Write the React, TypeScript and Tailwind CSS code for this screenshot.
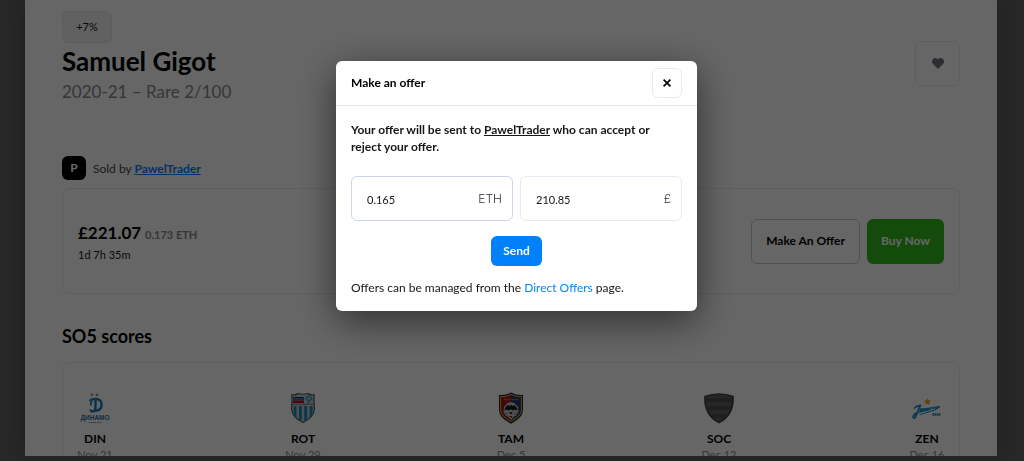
import React, { useState } from "react";

function DinamoLogo() {
  return (
    <svg viewBox="0 0 32 32" className="h-8 w-8" aria-hidden="true">
      <path d="M13 1l.6 1 1.200.1-.9.9.3 1.200-1.200-.5-1.100.5.2-1.200-.9-.9 1.200-.1zM18 1l.6 1 1.200.1-.9.9.3 1.200-1.200-.5-1.100.5.2-1.200-.9-.9 1.200-.1z" fill="#b98a5c" />
      <path d="M11 9.200c.8-3 11.600-4.400 11.600 3.600 0 5.200-4 6.400-8 6" fill="none" stroke="#1c78bd" strokeWidth="2.400" />
      <path d="M16.500 7v8.500c0 2.500-1.200 4-3 4-1.300 0-2-.9-1.600-2" fill="none" stroke="#1c78bd" strokeWidth="2.400" />
      <path d="M13.500 9.500q-3 1.200-1.200 4.200" fill="none" stroke="#1c78bd" strokeWidth="1.500" />
      <text x="16" y="27.500" textAnchor="middle" fontSize="6.500" fontWeight="700" fill="#2c70a8" fontFamily="Liberation Sans, sans-serif">ДИНАМО</text>
      <path d="M10 30.500h12.500" stroke="#a08468" strokeWidth="1.200" strokeDasharray="1.300 .6" />
    </svg>
  );
}

function RotorLogo() {
  return (
    <svg viewBox="0 0 32 32" className="h-8 w-8" aria-hidden="true">
      <path d="M5 2.500Q9 3.500 11 1.500Q16 3 21 1.500Q23 3.500 27 2.500Q27.500 5 27 8L27.500 17Q27 25 16 30.500Q5 25 4.500 17L5 8Q4.500 5 5 2.500Z" fill="#c5cacd" stroke="#535a60" strokeWidth="1.200" />
      <path d="M6 5h11v1.500H6z" fill="#26394a" />
      <path d="M6 6.500h11v2H6z" fill="#1879c0" />
      <path d="M6 8.500h11V11H6z" fill="#c70b24" />
      <path d="M19.500 5.500q2.500-2 5 0 .8 2-1.500 2.500l-1.500 2.200-.8-2.200q-1.700-.5-1.200-2.500z" fill="none" stroke="#279bd4" strokeWidth="1.400" />
      <path d="M5 12.200h22" stroke="#52575d" strokeWidth="1" strokeDasharray="2 .7" />
      <path d="M6.500 14h3v12q-3-3-3-7zM12 14h2.800v15L12 27.500zM17.300 14h2.800v13.500l-2.800 1.500zM22.600 14h3v5q0 4-3 7z" fill="#1489c2" />
    </svg>
  );
}

function TambovLogo() {
  return (
    <svg viewBox="0 0 32 32" className="h-8 w-8" aria-hidden="true">
      <path d="M16 1.500Q21 4.500 27 4v14q0 7-11 12.500Q5 25 5 18V4q6 .5 11-2.500z" fill="#a71522" stroke="#161616" strokeWidth="2" />
      <path d="M16 3Q21 5.500 26 5v13q0 6-10 11z" fill="#24356d" />
      <path d="M16 2.500Q21 5 26.500 4.500v13.500q0 6-10.500 11.500Q5.500 24 5.500 18V4.500q5.500.5 10.500-2z" fill="none" stroke="#c8a22c" strokeWidth="1.200" />
      <path d="M9 7.500h7" stroke="#e05a4b" strokeWidth="1.500" strokeDasharray="1.800 .6" />
      <path d="M16.500 7.500h7" stroke="#8d73a1" strokeWidth="1.500" strokeDasharray="1.800 .6" />
      <path d="M9 15l3.500-4 3.500-1 3.500 1 3.500 4 .5 5-2.500 4-2 .5L16 28l-3-3.500-2-.5L8.500 20z" fill="#c4c7cc" />
      <path d="M10 16l2.500-3 2 1L16 12.500l1.500 1.500 2-1 2.500 3 .5 2.500-2.500-1-1.500 1-2-1h-1l-2 1-1.500-1-2.500 1z" fill="#16191f" />
      <path d="M14.500 20h3l-.5 2h-2zM14.500 24h3L16 26z" fill="#24272d" />
      <path d="M10.500 21l2 1.500M21.500 21l-2 1.500" stroke="#4b4e54" strokeWidth=".8" />
    </svg>
  );
}

function SochiLogo() {
  return (
    <svg viewBox="0 0 32 32" className="h-8 w-8" aria-hidden="true">
      <path d="M16 2q7 0 14 2.500Q31 23 16 30.500 1 23 2 4.500 9 2 16 2z" fill="#606060" stroke="#3c3c3c" strokeWidth="1.600" />
      <path d="M3 6h26v4H3zM3.500 14h25l-1.500 4H5zM7 22h18l-3.500 4h-11z" fill="#4e4e4e" />
    </svg>
  );
}

function ZenitLogo() {
  return (
    <svg viewBox="0 0 32 32" className="h-8 w-8" aria-hidden="true">
      <path d="M16.500 6l1 2.400 2.600.2-2 1.700.6 2.500-2.200-1.300-2.200 1.300.6-2.500-2-1.700 2.600-.2z" fill="#d5a427" />
      <g fill="none" stroke="#1790cd" strokeLinecap="round" strokeLinejoin="round">
        <path d="M3.500 16q2.500-2.500 6-2.700Q7.500 17 5.500 22.500q-1 4-3 3.500-2-2 4-5.700" strokeWidth="1.700" />
        <path d="M8.500 18.500q3-.3 2.800-1.700-1-.8-2 .8-.8 2.300 1 2 1.700-.8 2.600-3l-.5 2.500q1.500-2.800 2.800-2.700l-.6 2.500q1.500-2.500 2.400-2.700l-.3 2.200 2-2.400 9.800-1.500-4 2.500" strokeWidth="1.200" />
        <path d="M6.500 20.800L29 14.500l-5 3.500L9 22.500" strokeWidth="1" />
      </g>
      <path d="M21.500 22.500h8" stroke="#2d79a7" strokeWidth="2.300" strokeDasharray="1.600 .5" />
    </svg>
  );
}

const fixtures = [
  { team: "DIN", date: "Nov 21", Logo: DinamoLogo },
  { team: "ROT", date: "Nov 29", Logo: RotorLogo },
  { team: "TAM", date: "Dec 5", Logo: TambovLogo },
  { team: "SOC", date: "Dec 12", Logo: SochiLogo },
  { team: "ZEN", date: "Dec 16", Logo: ZenitLogo },
];

function CardPage() {
  return (
    <div className="flex h-screen flex-col bg-[#626262] pr-[27px] pb-[5px] pl-[25px]">
      <main className="min-h-0 flex-1 overflow-hidden bg-white px-[37px] pt-[11px] shadow-[0_0_20px_rgba(0,0,0,0.2)]">
        <header className="flex items-start justify-between">
          <div>
            <span className="flex h-8 w-[50px] items-center justify-center rounded-md border border-[#e8e8e8] bg-[#f2f2f2] text-[11px]">+7%</span>
            <h1 className="text-[26px] leading-9 font-bold text-black">Samuel Gigot</h1>
            <p className="text-[17px] leading-[26px] text-[#85878f]">2020-21 – Rare 2/100</p>
          </div>
          <button type="button" aria-label="Add to favourites" className="mt-[30px] flex h-[45px] w-[45px] items-center justify-center rounded-md border border-[#ececf2]">
            <svg viewBox="0 0 24 22" className="h-[11px] w-3" aria-hidden="true">
              <path d="M12 22L2 12C-1 8.500-.5 4 2.500 1.500 5.500-.8 9.500 0 12 3c2.500-3 6.500-3.800 9.500-1.500 3 2.500 3.500 7 .5 10.500z" fill="#72747f" />
            </svg>
          </button>
        </header>

        <div className="mt-[51px] flex items-center gap-[7px] text-xs">
          <span className="flex h-6 w-6 items-center justify-center rounded-md bg-black font-bold text-white">P</span>
          <p className="pt-0.5 text-[#444444]">
            Sold by <a href="#seller" className="font-bold text-[#0082fb] underline">PawelTrader</a>
          </p>
        </div>

        <section className="mt-2 flex h-[106px] items-center justify-between rounded-lg border border-[#ececf2] px-[15px]">
          <div className="pt-1.5">
            <p className="leading-5 font-bold">
              <span className="text-[17px] text-black">£221.07</span>{" "}
              <span className="text-[11px] text-[#85878f]">0.173 ETH</span>
            </p>
            <p className="text-[11px] leading-5">1d 7h 35m</p>
          </div>
          <div className="flex gap-[7px] text-xs font-bold">
            <button type="button" className="h-[45px] rounded-md border border-[#c9c9c9] px-3.5 text-black">Make An Offer</button>
            <button type="button" className="h-[45px] rounded-md bg-[#33b81f] px-3.5 text-white">Buy Now</button>
          </div>
        </section>

        <h2 className="mt-[30px] text-[18px] leading-6 font-bold text-black">SO5 scores</h2>
        <section className="mt-3.5 flex justify-between rounded-lg border border-[#ececf2] px-[15px] pt-[29px] pb-8">
          {fixtures.map(({ team, date, Logo }) => (
            <div key={team} className="flex w-[34px] flex-col items-center whitespace-nowrap">
              <Logo />
              <span className="mt-[7px] text-xs leading-4 font-bold text-black">{team}</span>
              <span className="text-[11px] leading-4 text-[#85878f]">{date}</span>
            </div>
          ))}
        </section>
      </main>
    </div>
  );
}

function AmountField({ id, label, unit, initial, active }: { id: string; label: string; unit: string; initial: string; active?: boolean }) {
  const [value, setValue] = useState(initial);
  return (
    <div className={`flex h-[45px] min-w-0 flex-1 items-center rounded-md border pr-2.5 pl-[15px] ${active ? "border-[#ccd5e8]" : "border-[#e9e9f3]"}`}>
      <label htmlFor={id} className="sr-only">{label}</label>
      <input id={id} value={value} onChange={(e) => setValue(e.target.value)} inputMode="decimal" className="w-full min-w-0 flex-1 pt-1 text-[11px] outline-none" />
      <span className="pt-px font-['Inter','Liberation_Sans',sans-serif] text-xs font-light text-[#333333]">{unit}</span>
    </div>
  );
}

function OfferDialog() {
  return (
    <div className="fixed inset-0 flex items-start justify-center bg-black/60 pt-[61px] pl-[9px]">
      <div role="dialog" aria-modal="true" aria-labelledby="offer-title" className="w-[361px] max-w-full rounded-md bg-white shadow-[0_10px_38px_rgba(0,0,0,0.55)]">
        <div className="flex h-[45px] items-center justify-between border-b border-[#e5e5e8] px-[15px]">
          <h2 id="offer-title" className="text-xs font-bold text-black">Make an offer</h2>
          <button type="button" aria-label="Close" className="flex h-[30px] w-[30px] items-center justify-center rounded-md border border-[#e9e9f3]">
            <svg viewBox="0 0 8 8" className="h-2 w-2" aria-hidden="true">
              <path d="M.6 .6l6.800 6.800M7.400 .6L.6 7.400" stroke="#000" strokeWidth="1.700" />
            </svg>
          </button>
        </div>
        <form className="px-[15px] pt-[15px] pb-[15px]" onSubmit={(e) => e.preventDefault()}>
          <p className="text-xs leading-[17px] font-bold">
            Your offer will be sent to <a href="#seller" className="underline">PawelTrader</a> who can accept or reject your offer.
          </p>
          <div className="mt-[21px] flex gap-[7px]">
            <AmountField id="offer-eth" label="Offer in ETH" unit="ETH" initial="0.165" active />
            <AmountField id="offer-gbp" label="Offer in pounds" unit="£" initial="210.85" />
          </div>
          <button type="submit" className="mx-auto mt-[15px] block h-[30px] rounded-md bg-[#0080fb] px-3 text-xs font-bold text-white">Send</button>
          <p className="mt-[13px] text-xs leading-[17px]">
            Offers can be managed from the <a href="#direct-offers" className="text-[#0a84f5]">Direct Offers</a> page.
          </p>
        </form>
      </div>
    </div>
  );
}

export default function App() {
  return (
    <div className="font-['Lato','Liberation_Sans',sans-serif] text-[#161616]">
      <CardPage />
      <OfferDialog />
    </div>
  );
}
